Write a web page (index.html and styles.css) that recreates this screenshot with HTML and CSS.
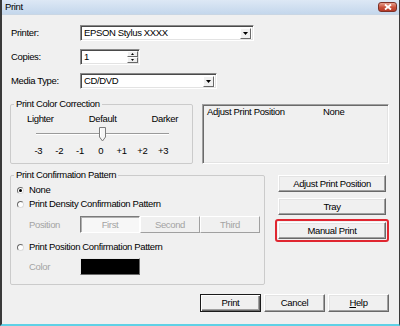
FILE: index.html
```html
<!DOCTYPE html>
<html>
<head>
<meta charset="utf-8">
<title>Print</title>
<link rel="stylesheet" href="styles.css">
</head>
<body>
<div class="window">
  <div class="titlebar">
    <span class="title">Print</span>
    <span class="close"><svg width="8" height="6" viewBox="0 0 8 6"><path d="M1 0.5 L7 5.5 M7 0.5 L1 5.5" stroke="#fff" stroke-width="1.8" fill="none"/></svg></span>
  </div>
  <div class="content">
    <div class="form">
      <span class="lbl">Printer:</span>
      <div class="field select w-printer"><span class="val">EPSON Stylus XXXX</span><span class="drop"><svg width="5" height="3" viewBox="0 0 5 3"><path d="M0 0 H5 L2.5 3 Z" fill="#000"/></svg></span></div>
      <span class="lbl">Copies:</span>
      <div class="field spin"><span class="val">1</span><span class="spinbtns"><span class="sb"><svg width="3" height="2" viewBox="0 0 3 2"><path d="M1.5 0 L3 2 H0 Z" fill="#000"/></svg></span><span class="sb"><svg width="3" height="2" viewBox="0 0 3 2"><path d="M0 0 H3 L1.5 2 Z" fill="#000"/></svg></span></span></div>
      <span class="lbl">Media Type:</span>
      <div class="field select w-media"><span class="val">CD/DVD</span><span class="drop"><svg width="5" height="3" viewBox="0 0 5 3"><path d="M0 0 H5 L2.5 3 Z" fill="#000"/></svg></span></div>
    </div>

    <div class="middle">
      <fieldset class="group g-color">
        <legend>Print Color Correction</legend>
        <div class="scale-labels"><span>Lighter</span><span>Default</span><span>Darker</span></div>
        <div class="slider">
          <span class="track"></span>
          <svg class="thumb" width="7" height="15" viewBox="0 0 7 15"><path d="M0.5 0.5 H6.5 V10 L3.5 14 L0.5 10 Z" fill="#f6f6f6" stroke="#7c7c7c"/><path d="M1.5 1.5 V9.5" stroke="#fff"/></svg>
          <span class="track"></span>
        </div>
        <div class="nums"><span>-3</span><span>-2</span><span>-1</span><span>0</span><span>+1</span><span>+2</span><span>+3</span></div>
      </fieldset>
      <div class="infobox"><span>Adjust Print Position</span><span>None</span></div>
    </div>

    <div class="lower">
      <fieldset class="group g-pattern">
        <legend>Print Confirmation Pattern</legend>
        <div class="radio-row"><span class="radio on"></span><span>None</span></div>
        <div class="radio-row"><span class="radio"></span><span>Print Density Confirmation Pattern</span></div>
        <div class="opt-row pos-row">
          <span class="dim">Position</span>
          <div class="seg"><span class="segbtn pressed">First</span><span class="segbtn">Second</span><span class="segbtn">Third</span></div>
        </div>
        <div class="radio-row r-pos"><span class="radio"></span><span>Print Position Confirmation Pattern</span></div>
        <div class="opt-row color-row">
          <span class="dim">Color</span>
          <span class="swatch"></span>
        </div>
      </fieldset>
      <div class="side">
        <button class="btn">Adjust Print Position</button>
        <button class="btn">Tray</button>
        <span class="highlight"><button class="btn">Manual Print</button></span>
      </div>
    </div>

    <div class="footer">
      <button class="btn default">Print</button>
      <button class="btn">Cancel</button>
      <button class="btn"><u>H</u>elp</button>
    </div>
  </div>
</div>
</body>
</html>
```

FILE: styles.css
```css
* { box-sizing: border-box; }
html, body { margin: 0; padding: 0; }
body {
  width: 400px;
  height: 326px;
  overflow: hidden;
  background: #f0f0f0;
  font-family: "Liberation Sans", Arial, sans-serif;
  font-size: 9.5px;
  letter-spacing: -0.35px;
  line-height: 12px;
  color: #000;
}
.window {
  width: 400px;
  height: 326px;
  display: flex;
  flex-direction: column;
  background: #f0f0f0;
  border-left: 2px solid #3a3a3a;
  border-right: 1px solid #3a3a3a;
  border-bottom: 2px solid #5fd1e6;
}
.titlebar {
  flex: none;
  height: 15px;
  display: flex;
  align-items: center;
  justify-content: space-between;
  padding: 0 2px 0 3px;
  background: linear-gradient(#dde8f5, #c4d7ec);
  border-bottom: 1px solid #c9d6e4;
}
.title { font-size: 9.5px; color: #000; }
.close {
  width: 19px;
  height: 10px;
  display: flex;
  align-items: center;
  justify-content: center;
  border: 1px solid #7d3127;
  border-radius: 3px;
  background: linear-gradient(#e8a08f, #c8503a 55%, #b63a28);
}
.close svg { display: block; }

.content {
  flex: 1;
  display: flex;
  flex-direction: column;
  padding: 10px 10px 0 8px;
}

/* top form */
.form {
  display: grid;
  grid-template-columns: 69px auto;
  grid-auto-rows: 16px;
  row-gap: 8px;
  align-items: center;
  margin-left: 1px;
}
.lbl { line-height: 12px; }
.field {
  height: 16px;
  display: flex;
  align-items: center;
  background: #fff;
  border: 1px solid;
  border-color: #8a8a8a #fff #fff #8a8a8a;
  box-shadow: inset 1px 1px #4a4a4a, inset -1px -1px #e3e3e3;
  padding: 0 2px 0 2px;
}
.field .val { flex: 1; padding-left: 1px; }
.w-printer { width: 174px; }
.w-media { width: 137px; }
.spin { width: 60px; padding-right: 1px; }
.drop {
  width: 11px;
  height: 11px;
  display: flex;
  align-items: center;
  justify-content: center;
  background: #f0f0f0;
  border: 1px solid;
  border-color: #fff #6a6a6a #6a6a6a #fff;
}
.drop svg, .sb svg { display: block; }
.spinbtns {
  display: flex;
  flex-direction: column;
  width: 11px;
  height: 12px;
}
.sb {
  flex: 1;
  display: flex;
  align-items: center;
  justify-content: center;
  background: #f0f0f0;
  border: 1px solid;
  border-color: #fff #6a6a6a #6a6a6a #fff;
}

/* group boxes */
.group {
  margin: 0;
  padding: 0;
  min-width: 0;
  border: 1px solid #cbcbcb;
  border-radius: 2px;
}
.group legend {
  margin-left: 3px;
  padding: 0 2px;
  line-height: 12px;
}

.middle {
  display: flex;
  align-items: flex-end;
  margin-top: 9px;
}
.g-color {
  width: 183px;
  height: 66px;
  display: flex;
  flex-direction: column;
}
.scale-labels {
  display: flex;
  justify-content: space-between;
  padding: 0 14px 0 16px;
  margin-top: 3px;
}
.slider {
  display: flex;
  align-items: flex-start;
  width: 133px;
  height: 15px;
  margin: 2px 0 0 25px;
}
.track {
  flex: 1;
  height: 2px;
  margin-top: 6px;
  border-top: 1px solid #9a9a9a;
  border-bottom: 1px solid #fff;
}
.thumb { display: block; flex: none; }
.nums {
  display: grid;
  grid-template-columns: repeat(7, 20.8px);
  margin: 3px 0 0 17px;
  text-align: center;
}
.infobox {
  width: 187px;
  height: 60px;
  margin-left: 9px;
  display: grid;
  grid-template-columns: 116px auto;
  align-content: start;
  padding: 1px 0 0 4px;
  border: 1px solid;
  border-color: #a0a0a0 #fff #fff #a0a0a0;
  box-shadow: inset 1px 1px #6a6a6a, inset -1px -1px #e3e3e3;
  line-height: 12px;
}

.lower {
  display: flex;
  align-items: flex-start;
  margin-top: 5px;
}
.g-pattern {
  width: 257px;
  height: 116px;
  display: flex;
  flex-direction: column;
}
.radio-row {
  display: flex;
  align-items: center;
  height: 14px;
  padding-left: 6px;
  gap: 5px;
}
.radio-row:first-of-type { margin-top: 2px; }
.radio {
  width: 7px;
  height: 7px;
  flex: none;
  border-radius: 50%;
  background: #fff;
  border: 1px solid;
  border-color: #6a6a6a #dcdcdc #dcdcdc #6a6a6a;
  display: flex;
  align-items: center;
  justify-content: center;
}
.radio.on::after {
  content: "";
  width: 3px;
  height: 3px;
  border-radius: 50%;
  background: #000;
}
.opt-row {
  display: flex;
  align-items: center;
  padding-left: 18px;
}
.dim { width: 51px; color: #a3a3a3; }
.pos-row { margin-top: 5px; }
.r-pos { margin-top: 7px; }
.color-row { margin-top: 4px; }
.seg { display: flex; }
.segbtn {
  width: 60px;
  height: 17px;
  display: flex;
  align-items: center;
  justify-content: center;
  color: #a3a3a3;
  background: #f0f0f0;
  border: 1px solid;
  border-color: #fff #a0a0a0 #a0a0a0 #fff;
}
.segbtn.pressed {
  background: #f7f7f7;
  border-color: #7a7a7a #fff #fff #7a7a7a;
  box-shadow: inset 1px 1px #b0b0b0;
}
.swatch {
  width: 60px;
  height: 17px;
  background: #000;
  border: 1px solid;
  border-color: #e8e8e8 #6a6a6a #6a6a6a #e8e8e8;
}

.side {
  display: flex;
  flex-direction: column;
  align-items: center;
  width: 114px;
  margin: 6px 0 0 10px;
}
.btn {
  font-family: inherit;
  font-size: 9.5px;
  letter-spacing: -0.35px;
  line-height: 12px;
  color: #000;
  padding: 0;
  margin: 0;
  background: #f0f0f0;
  border: 1px solid;
  border-color: #fff #696969 #696969 #fff;
  box-shadow: inset -1px -1px #a0a0a0, inset 1px 1px #e3e3e3;
  border-radius: 0;
  height: 17px;
}
.side .btn { width: 108px; }
.side .btn + .btn { margin-top: 6px; }
.highlight {
  margin-top: 4px;
  padding: 1px;
  border: 2px solid #e02630;
  border-radius: 3px;
  display: flex;
}
.footer {
  display: flex;
  justify-content: flex-end;
  gap: 3px;
  margin-top: 9px;
}
.footer .btn { width: 61px; height: 18px; }
.btn.default {
  border: 1px solid #1a1a1a;
  box-shadow: inset 1px 1px #fff, inset -1px -1px #696969, inset -2px -2px #a0a0a0;
}
.btn u { text-decoration: underline; }
```
